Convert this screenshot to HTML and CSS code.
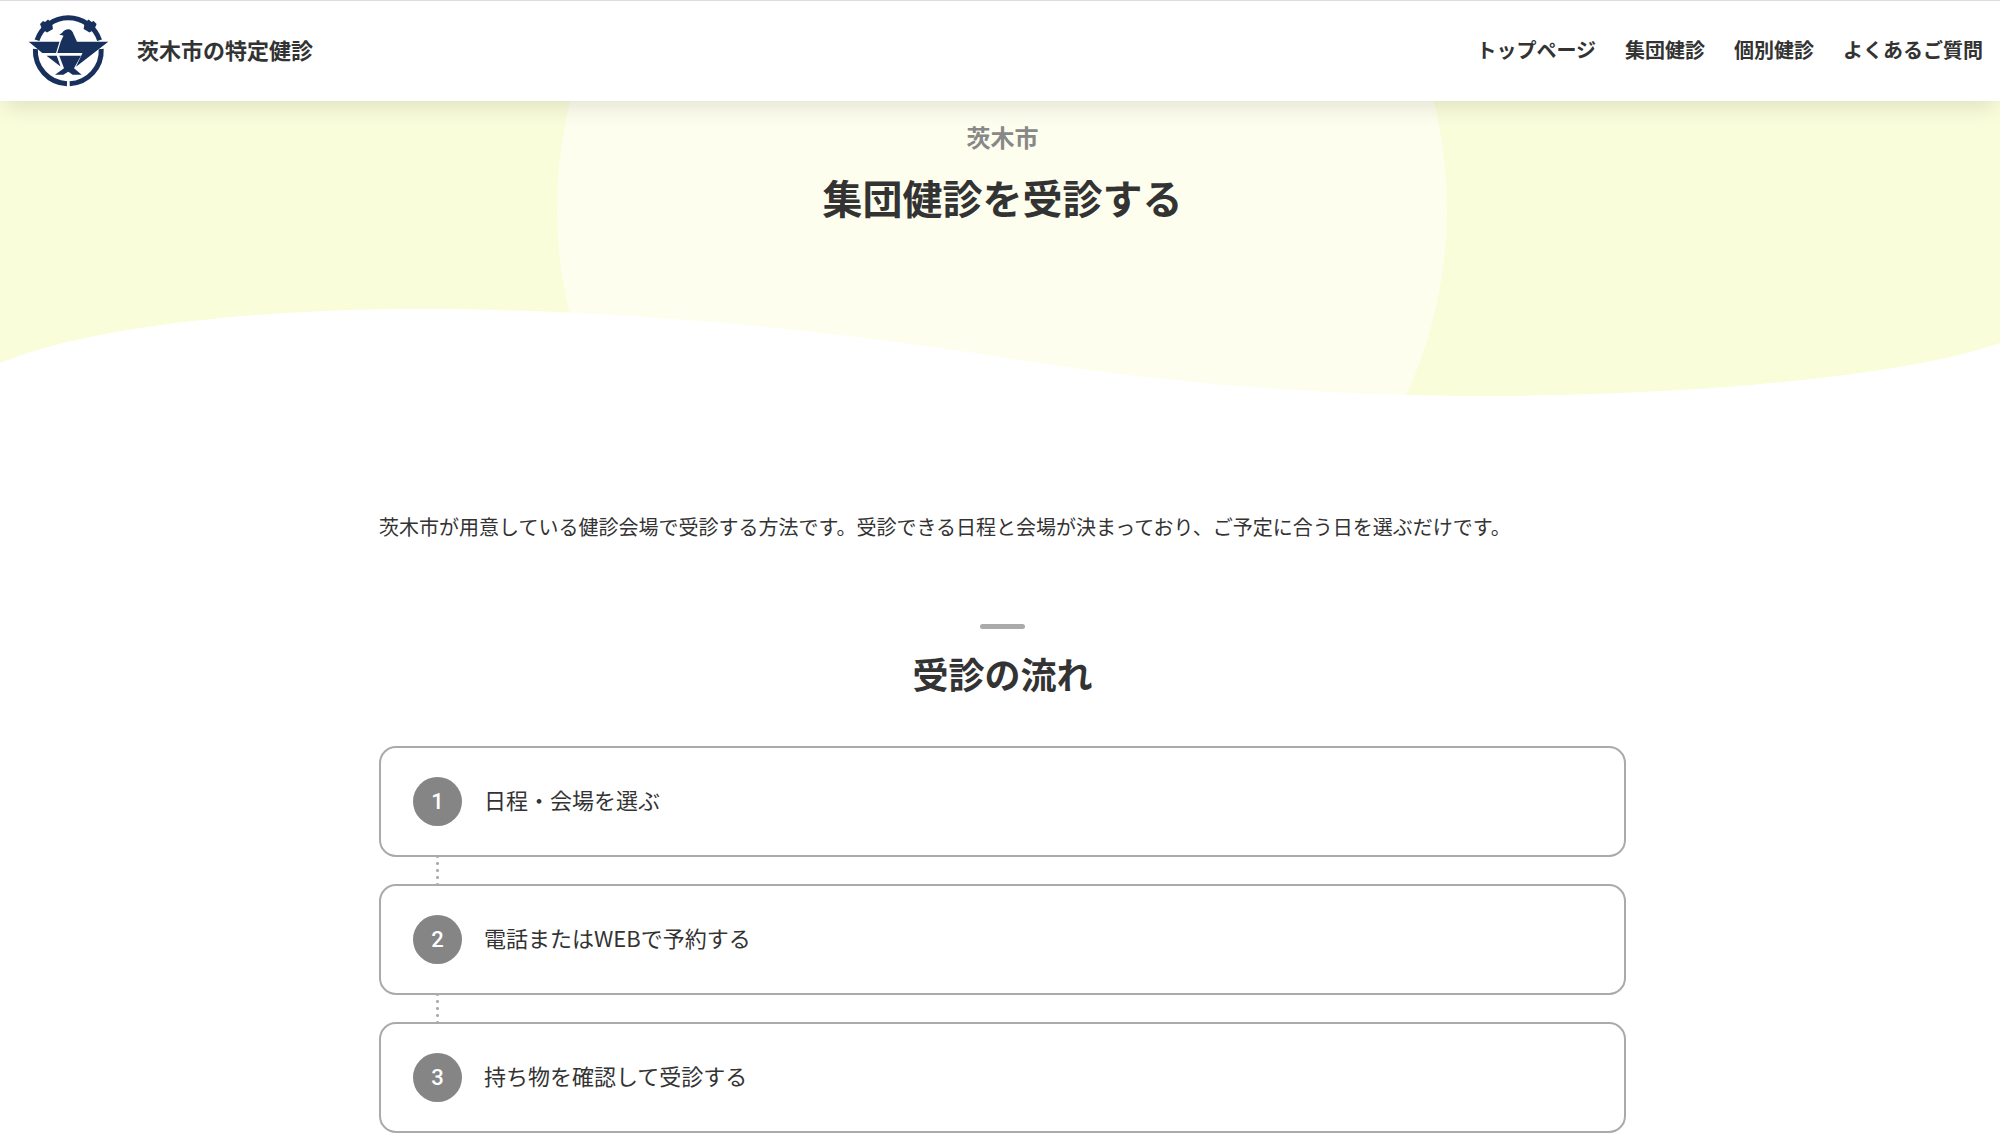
FILE: index.html
```html
<!DOCTYPE html>
<html lang="ja">
<head>
    <meta charset="UTF-8">
    <meta name="viewport" content="width=device-width, initial-scale=1.0">
    <title>集団健診を受診する | 茨木市の特定健診</title>
    <link rel="stylesheet" href="styles.css">
</head>
<body>
    <header class="header">
        <a class="brand" href="#">
            <svg class="logo" viewBox="0 0 81 72" aria-hidden="true">
                <g fill="none" stroke="#18305c" stroke-width="5">
                    <path d="M9 25.300A33 33 0 0 1 71.600 25.300"/>
                    <path d="M7.400 34A33 33 0 0 0 39 68.700"/>
                    <path d="M73.200 34A33 33 0 0 1 41.700 68.700"/>
                </g>
                <g fill="#18305c">
                    <path d="M12 9L15 6L17 7L20 4.500L24 8L25 14L19 17.500L14 14z"/>
                    <path d="M68.600 9L65.600 6L63.600 7L60.600 4.500L56.600 8L55.600 14L61.600 17.500L66.600 14z"/>
                    <path d="M.7 26.700H31.500L28 38H14.300z"/>
                    <path d="M31.300 19.500L34 18Q36.500 14.300 40.300 14.300Q44 14.500 45.500 19L49 26.700H80.300L48 51.700L54.500 38H29.300L32.700 26.700L35.500 20.700z"/>
                    <path d="M18.500 40.700H28.700L32.500 51.500z"/>
                    <path d="M31.300 40.700H53L46 53.300L53.700 59.700H44.700L40.300 56.700L35.300 59.700H27L36 53.300z"/>
                </g>
            </svg>
            <span class="brand-name">茨木市の特定健診</span>
        </a>
        <nav class="nav">
            <a href="#">トップページ</a>
            <a href="#">集団健診</a>
            <a href="#">個別健診</a>
            <a href="#">よくあるご質問</a>
        </nav>
    </header>

    <section class="hero">
        <div class="hero-circle"></div>
        <svg class="hero-wave" viewBox="0 0 2000 100" preserveAspectRatio="none" aria-hidden="true">
            <path fill="#fff" d="M0 57C85 22 245 3 420 3C620 3 840 25 1000 51C1120 70 1280 90 1475 90C1700 90 1910 69 2000 37V100H0z"/>
        </svg>
        <div class="hero-text">
            <p class="hero-city">茨木市</p>
            <h1>集団健診を受診する</h1>
        </div>
    </section>

    <main class="main">
        <p class="lead">茨木市が用意している健診会場で受診する方法です。受診できる日程と会場が決まっており、ご予定に合う日を選ぶだけです。</p>

        <h2 class="section-title">受診の流れ</h2>

        <ol class="steps">
            <li class="step"><span class="step-number">1</span>日程・会場を選ぶ</li>
            <li class="step"><span class="step-number">2</span>電話またはWEBで予約する</li>
            <li class="step"><span class="step-number">3</span>持ち物を確認して受診する</li>
        </ol>
    </main>
</body>
</html>
```

FILE: styles.css
```css
* {
    box-sizing: border-box;
}

body {
    margin: 0;
    font-family: "Noto Sans CJK JP", sans-serif;
    font-size: 20px;
    line-height: 30px;
    color: #333;
    background: #fff;
    overflow-x: hidden;
    scrollbar-width: none;
}

a {
    color: inherit;
    text-decoration: none;
}

.header {
    position: relative;
    z-index: 1;
    display: flex;
    align-items: center;
    justify-content: space-between;
    height: 101px;
    padding: 0 17px 0 28px;
    border-top: 1px solid #ddd;
    background: #fff;
    box-shadow: 0 12px 20px -5px rgba(0, 0, 0, 0.1);
}

.brand {
    display: flex;
    align-items: center;
    gap: 28px;
}

.logo {
    width: 81px;
    height: 72px;
}

.brand-name {
    padding-bottom: 5px;
    font-size: 22px;
    font-weight: 700;
}

.nav {
    display: flex;
    gap: 29px;
    padding-bottom: 2px;
    font-weight: 700;
}

.hero {
    position: relative;
    height: 305px;
    padding: 18px 0 0 5px;
    background: #f9fdda;
    overflow: hidden;
}

.hero-circle {
    position: absolute;
    top: -337px;
    left: 50%;
    width: 890px;
    height: 890px;
    margin-left: -443px;
    border-radius: 50%;
    background: #fefeee;
}

.hero-wave {
    position: absolute;
    left: 0;
    bottom: 0;
    width: 100%;
    height: 100px;
}

.hero-text {
    position: relative;
    text-align: center;
}

.hero-city {
    margin: 0;
    font-size: 24px;
    line-height: 36px;
    font-weight: 700;
    color: #888;
}

h1 {
    margin: 12px 0 0;
    font-size: 40px;
    line-height: 60px;
    font-weight: 700;
}

.main {
    width: 1252px;
    max-width: 100%;
    margin: 0 auto;
    padding: 106px 0 0 5px;
}

.lead {
    margin: 0;
}

.section-title {
    margin: 82px 0 46px;
    font-size: 36px;
    line-height: 54px;
    font-weight: 700;
    text-align: center;
}

.section-title::before {
    content: "";
    display: block;
    width: 45px;
    height: 5px;
    margin: 0 auto 17px;
    border-radius: 3px;
    background: #aaa;
}

.steps {
    display: grid;
    gap: 27px;
    margin: 0;
    padding: 0;
    list-style: none;
}

.step {
    position: relative;
    display: flex;
    align-items: center;
    gap: 22px;
    height: 111px;
    padding: 0 32px 5px;
    border: 2px solid #aaa;
    border-radius: 17px;
    font-size: 22px;
}

/* dotted connector to the next step */
.step:not(:last-child)::after {
    content: "";
    position: absolute;
    top: 100%;
    left: 55px;
    width: 3px;
    height: 29px;
    background: radial-gradient(circle, #aaa 1px, transparent 2px) 0 -2px / 3px 7px;
}

.step-number {
    width: 49px;
    height: 49px;
    margin-top: 5px;
    border-radius: 50%;
    background: #858585;
    color: #fff;
    font-family: Roboto, sans-serif;
    font-weight: 500;
    line-height: 49px;
    text-align: center;
}
```
